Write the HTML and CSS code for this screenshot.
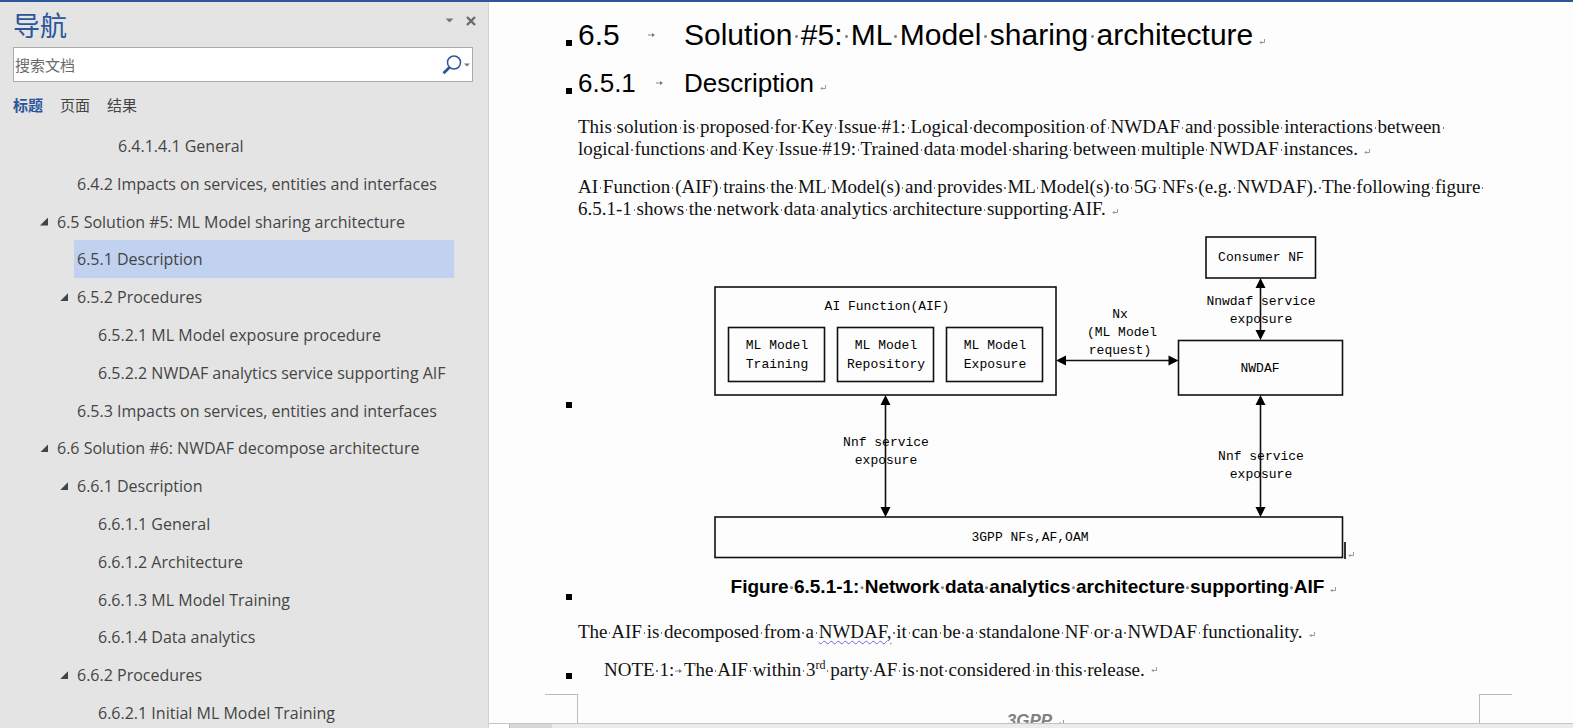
FILE: index.html
```html
<!DOCTYPE html>
<html lang="zh-CN">
<head>
<meta charset="utf-8">
<title>导航</title>
<link rel="stylesheet" href="styles.css">
</head>
<body>
<svg class="defs" aria-hidden="true">
  <symbol id="para" viewBox="0 0 6 6"><path d="M5.5 0V3.5H1M2.5 2L1 3.5L2.5 5" fill="none" stroke="#999" stroke-width="1"/></symbol>
  <symbol id="tab" viewBox="0 0 8 6"><path d="M0 3H6" stroke="#888" fill="none"/><path d="M4 1L7 3L4 5Z" fill="#777"/></symbol>
</svg>
<div class="app">
  <aside class="nav">
    <header class="nav-head">
      <h2 class="nav-title">导航</h2>
      <div class="nav-tools">
        <button class="tool" type="button" aria-label="选项"><svg width="9" height="5" viewBox="0 0 9 5"><path d="M0.500 0.500H8.500L4.500 4.500Z" fill="#777"/></svg></button>
        <button class="tool" type="button" aria-label="关闭"><svg width="10" height="10" viewBox="0 0 10 10"><path d="M1 1L9 9M9 1L1 9" stroke="#6a6a6a" stroke-width="2.400"/></svg></button>
      </div>
    </header>
    <div class="search">
      <input class="search-input" type="text" aria-label="搜索文档" placeholder="搜索文档">
      <button class="tool" type="button" aria-label="搜索">
        <svg width="28" height="20" viewBox="0 0 28 20"><circle cx="12" cy="7.500" r="6.500" fill="none" stroke="#2b579a" stroke-width="1.500"/><path d="M7.600 12.200L1.500 18.300" stroke="#2b579a" stroke-width="2.800"/><path d="M22 8.500H28L25 11.500Z" fill="#777"/></svg>
      </button>
    </div>
    <div class="tabs">
      <button class="tab active" type="button">标题</button>
      <button class="tab" type="button">页面</button>
      <button class="tab" type="button">结果</button>
    </div>
    <nav class="tree">
      <a class="item l4" href="#">6.4.1.4.1 General</a>
      <a class="item l2" href="#">6.4.2 Impacts on services, entities and interfaces</a>
      <a class="item l1 open" href="#">6.5 Solution #5: ML Model sharing architecture</a>
      <a class="item l2 current" href="#">6.5.1 Description</a>
      <a class="item l2 open" href="#">6.5.2 Procedures</a>
      <a class="item l3" href="#">6.5.2.1 ML Model exposure procedure</a>
      <a class="item l3" href="#">6.5.2.2 NWDAF analytics service supporting AIF</a>
      <a class="item l2" href="#">6.5.3 Impacts on services, entities and interfaces</a>
      <a class="item l1 open" href="#">6.6 Solution #6: NWDAF decompose architecture</a>
      <a class="item l2 open" href="#">6.6.1 Description</a>
      <a class="item l3" href="#">6.6.1.1 General</a>
      <a class="item l3" href="#">6.6.1.2 Architecture</a>
      <a class="item l3" href="#">6.6.1.3 ML Model Training</a>
      <a class="item l3" href="#">6.6.1.4 Data analytics</a>
      <a class="item l2 open" href="#">6.6.2 Procedures</a>
      <a class="item l3" href="#">6.6.2.1 Initial ML Model Training</a>
    </nav>
  </aside>
  <main class="doc">
    <article class="page">
      <h1 class="heading h-one bullet"><span class="num">6.5<svg class="tabmark"><use href="#tab"/></svg></span><span class="marks">Solution #5: ML Model sharing architecture</span><svg class="mark"><use href="#para"/></svg></h1>
      <h2 class="heading h-two bullet"><span class="num">6.5.1<svg class="tabmark"><use href="#tab"/></svg></span><span>Description</span><svg class="mark"><use href="#para"/></svg></h2>
      <p class="text marks">This solution is proposed for Key Issue #1: Logical decomposition of NWDAF and possible interactions between <br>logical functions and Key Issue #19: Trained data model sharing between multiple NWDAF instances.<svg class="mark"><use href="#para"/></svg></p>
      <p class="text marks">AI Function (AIF) trains the ML Model(s) and provides ML Model(s) to 5G NFs (e.g. NWDAF). The following figure <br>6.5.1-1 shows the network data analytics architecture supporting AIF.<svg class="mark"><use href="#para"/></svg></p>
      <figure class="figure">
        <div class="diagram bullet">
          <svg class="drawing" width="640" height="322" viewBox="0 0 640 322">
            <g fill="none" stroke="#111" stroke-width="1.600">
              <rect x="1" y="51" width="341" height="108"/>
              <rect x="14.500" y="91.500" width="96" height="54"/>
              <rect x="123.500" y="91.500" width="96" height="54"/>
              <rect x="232.500" y="91.500" width="96" height="54"/>
              <rect x="492" y="1" width="109.500" height="41"/>
              <rect x="464.500" y="104.500" width="164" height="54.500"/>
              <rect x="1" y="281" width="627.500" height="40.500"/>
              <path d="M171.500 165V275M546.500 48V98M546.500 165V275M348 124.500H459"/>
            </g>
            <path d="M171.500 159l5 10h-10zM171.500 281l5-10h-10zM546.500 42l5 10h-10zM546.500 104l5-10h-10zM546.500 159l5 10h-10zM546.500 281l5-10h-10zM342 124.500l10-5v10zM464.500 124.500l-10-5v10z" fill="#000"/>
            <path d="M631 306V323" stroke="#333" stroke-width="2"/>
            <use href="#para" x="634" y="316" width="6" height="6"/>
            <g class="labels">
              <text x="173" y="74">AI Function(AIF)</text>
              <text x="63" y="113">ML Model</text><text x="63" y="132">Training</text>
              <text x="172" y="113">ML Model</text><text x="172" y="132">Repository</text>
              <text x="281" y="113">ML Model</text><text x="281" y="132">Exposure</text>
              <text x="547" y="25">Consumer NF</text>
              <text x="547" y="69">Nnwdaf service</text><text x="547" y="87">exposure</text>
              <text x="406" y="82">Nx</text><text x="408" y="100">(ML Model</text><text x="406" y="118">request)</text>
              <text x="546" y="136">NWDAF</text>
              <text x="172" y="210">Nnf service</text><text x="172" y="228">exposure</text>
              <text x="547" y="224">Nnf service</text><text x="547" y="242">exposure</text>
              <text x="316" y="305">3GPP NFs,AF,OAM</text>
            </g>
          </svg>
        </div>
        <figcaption class="caption bullet"><span class="marks">Figure 6.5.1-1: Network data analytics architecture supporting AIF</span><svg class="mark"><use href="#para"/></svg></figcaption>
      </figure>
      <p class="text marks">The AIF is decomposed from a <span class="squiggle">NWDAF,</span> it can be a standalone NF or a NWDAF functionality.<svg class="mark"><use href="#para"/></svg></p>
      <p class="text note bullet"><span class="note-label marks">NOTE 1:<svg class="tabmark"><use href="#tab"/></svg></span><span class="marks">The AIF within 3<sup>rd</sup> party AF is not considered in this release.</span><svg class="mark"><use href="#para"/></svg></p>
      <footer class="foot">
        <span class="corner left"></span>
        <span class="foot-text">3GPP<svg class="mark"><use href="#para"/></svg></span>
        <span class="corner right"></span>
      </footer>
    </article>
    <div class="scroll"><span class="scroll-thumb"></span><span class="scroll-track"></span></div>
  </main>
</div>
<script src="marks.js"></script>
</body>
</html>
```
FILE: styles.css
```css
* { box-sizing: border-box; }
body { margin: 0; background: #fdfdfd; }
h1, h2, p, figure { margin: 0; font-weight: 400; }
.defs { position: absolute; width: 0; height: 0; }

.app {
  display: flex;
  height: 100vh;
  border-top: 2px solid #2b579a;
  overflow: hidden;
}

/* navigation pane */
.nav {
  flex: none;
  display: flex;
  flex-direction: column;
  width: 489px;
  padding-left: 13px;
  background: #e4e4e4;
  border-right: 1px solid #d2d2d2;
  color: #444;
  font-family: "Open Sans", "Noto Sans CJK SC", sans-serif;
}
.nav-head {
  display: flex;
  justify-content: space-between;
  height: 45px;
  padding-right: 12px;
}
.nav-title {
  color: #2b579a;
  font: 27px/46px "Noto Sans CJK SC", sans-serif;
}
.nav-tools { display: flex; gap: 12px; height: 37px; align-items: center; }
.tool { display: flex; padding: 0; border: 0; background: none; }
.search {
  display: flex;
  align-items: center;
  height: 35px;
  margin-right: 15px;
  padding-right: 2px;
  background: #fff;
  border: 1px solid #ababab;
}
.search-input {
  flex: 1;
  min-width: 0;
  padding: 0 1px;
  border: 0;
  outline: 0;
  background: none;
  font: 15px "Noto Sans CJK SC", sans-serif;
}
.search-input::placeholder { color: #6a6a6a; }
.tabs { display: flex; gap: 17px; height: 45px; align-items: center; }
.tab {
  padding: 0;
  border: 0;
  background: none;
  color: #444;
  font: 15px "Noto Sans CJK SC", sans-serif;
}
.tab.active { color: #2b579a; font-weight: 700; }
.tree {
  flex: 1;
  min-height: 0;
  display: grid;
  grid-auto-rows: 1fr;
  margin: 0 34px -4px 0;
}
.item {
  display: flex;
  align-items: center;
  min-height: 0;
  padding-left: 3px;
  color: #444;
  font-size: 16px;
  line-height: 20px;
  text-decoration: none;
  white-space: nowrap;
}
.l1 { margin-left: 41px; }
.l2 { margin-left: 61px; }
.l3 { margin-left: 82px; }
.l4 { margin-left: 102px; }
.current { background: #c0d2f0; }
.open::before {
  content: "";
  width: 8px;
  height: 8px;
  margin: 0 9px 0 -17px;
  background: #444;
  clip-path: polygon(100% 0, 100% 100%, 0 100%);
}

/* document */
.doc { flex: 1; min-width: 0; display: flex; flex-direction: column; }
.page {
  flex: 1;
  min-height: 0;
  display: flex;
  flex-direction: column;
  padding: 15px 94px 0 89px;
  overflow: hidden;
  color: #000;
  white-space: nowrap;
}
.heading { display: flex; font-family: "Liberation Sans", Arial, sans-serif; }
.num { display: flex; align-items: center; width: 106px; }
.h-one { font-size: 30px; line-height: 36px; }
.h-two { margin-top: 14px; font-size: 26px; line-height: 32px; }
.h-one .tabmark { margin-left: 28px; }
.h-two .tabmark { margin-left: 20px; }
.heading .mark { align-self: flex-end; margin-bottom: 8px; }
.mark { width: 6px; height: 6px; margin-left: 6px; }
.tabmark { width: 8px; height: 6px; }

.bullet { position: relative; }
.bullet::before {
  content: "";
  position: absolute;
  left: -12px;
  bottom: 5px;
  width: 6px;
  height: 6px;
  background: #000;
}
.h-one::before { bottom: 7px; }
.text {
  margin-top: 16px;
  color: #111;
  font: 19px/22px "Liberation Serif", "Times New Roman", serif;
}
.h-two + .text { margin-top: 17px; }
.gap { background: radial-gradient(circle at 50% 58%, #777 0, #777 1px, transparent 1px); white-space: pre; }
.h-one .gap, .caption .gap { background: radial-gradient(circle at 50% 56%, #888 0, #888 1px, transparent 2px); }

.figure { display: flex; flex-direction: column; margin-top: 16px; }
.diagram { display: flex; justify-content: center; padding-left: 11px; }
.diagram::before { bottom: 150px; }
.drawing { overflow: visible; }
.labels {
  fill: #000;
  font: 13px "Liberation Mono", "Courier New", monospace;
  text-anchor: middle;
}
.caption {
  margin-top: 18px;
  padding-left: 10px;
  font: bold 19px/22px "Liberation Sans", Arial, sans-serif;
  text-align: center;
}
.caption::before { bottom: -2px; }
.figure + .text { margin-top: 23px; }
.squiggle { text-decoration: underline wavy #6a6ae0 1px; text-underline-offset: 2px; }
.note { display: flex; align-items: center; padding-left: 26px; }
.note::before { bottom: 2px; }
.note-label { width: 80px; }
.note .tabmark { margin: 0 0 2px 1px; }
sup { font-size: 12px; line-height: 1px; }

.foot { flex: 1; display: flex; justify-content: space-between; margin: 13px -33px 0; }
.corner { width: 33px; border: 0 solid #bbb; border-top-width: 1px; }
.left { border-right-width: 1px; }
.right { border-left-width: 1px; }
.foot-text {
  padding: 16px 0 0 14px;
  color: #808080;
  font: italic bold 17px/22px "Liberation Sans", Arial, sans-serif;
}
.scroll { display: flex; flex: none; height: 5px; border-top: 1px solid #c4c4c4; background: #ececec; }
.scroll-thumb { width: 21px; background: #fff; border-right: 1px solid #bbb; }
.scroll-track { width: 42px; background: #d8d8d8; }
```
FILE: marks.js
```js
// Wrap every space in marked text so the stylesheet can show it as a dot.
document.querySelectorAll(".marks").forEach(function (root) {
  var walker = document.createTreeWalker(root, NodeFilter.SHOW_TEXT);
  var nodes = [];
  while (walker.nextNode()) nodes.push(walker.currentNode);
  nodes.forEach(function (node) {
    var parts = node.data.split(" ");
    var out = document.createDocumentFragment();
    parts.forEach(function (part, i) {
      if (i) {
        var gap = document.createElement("span");
        gap.className = "gap";
        gap.textContent = " ";
        out.append(gap);
      }
      out.append(part);
    });
    node.replaceWith(out);
  });
});
```
